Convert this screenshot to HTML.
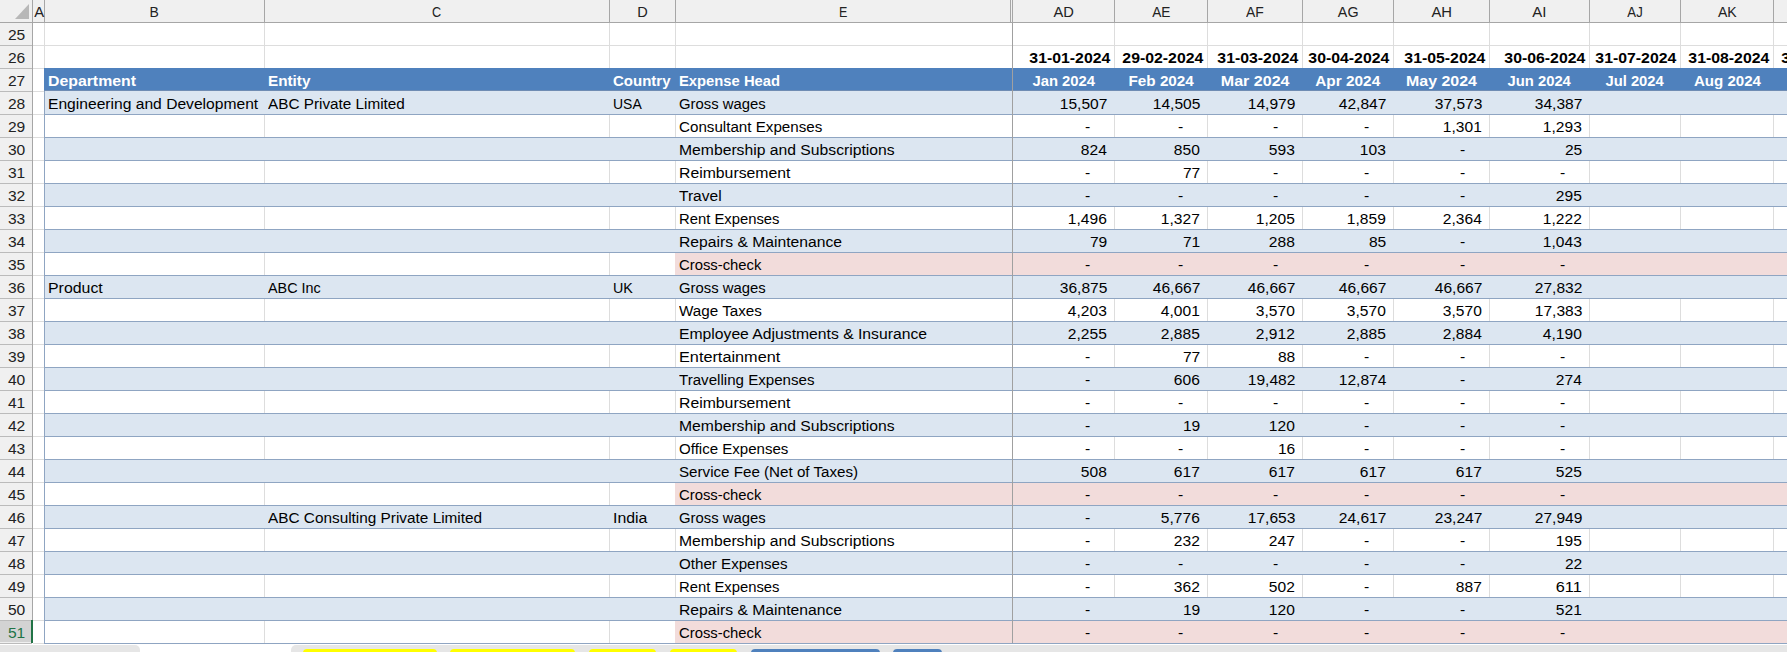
<!DOCTYPE html>
<html><head><meta charset="utf-8"><style>
html,body{margin:0;padding:0;}
body{width:1787px;height:652px;overflow:hidden;position:relative;background:#fff;font-family:"Liberation Sans",sans-serif;}
div,svg{position:absolute;}
span{position:absolute;white-space:pre;font-size:15.5px;line-height:20px;}
</style></head><body>
<div style="left:44px;top:23px;width:1px;height:620px;background:#DDDDDD;"></div>
<div style="left:264px;top:23px;width:1px;height:620px;background:#DDDDDD;"></div>
<div style="left:609px;top:23px;width:1px;height:620px;background:#DDDDDD;"></div>
<div style="left:675px;top:23px;width:1px;height:620px;background:#DDDDDD;"></div>
<div style="left:1114px;top:23px;width:1px;height:620px;background:#DDDDDD;"></div>
<div style="left:1207px;top:23px;width:1px;height:620px;background:#DDDDDD;"></div>
<div style="left:1302px;top:23px;width:1px;height:620px;background:#DDDDDD;"></div>
<div style="left:1393px;top:23px;width:1px;height:620px;background:#DDDDDD;"></div>
<div style="left:1489px;top:23px;width:1px;height:620px;background:#DDDDDD;"></div>
<div style="left:1589px;top:23px;width:1px;height:620px;background:#DDDDDD;"></div>
<div style="left:1680px;top:23px;width:1px;height:620px;background:#DDDDDD;"></div>
<div style="left:1773px;top:23px;width:1px;height:620px;background:#DDDDDD;"></div>
<div style="left:1866px;top:23px;width:1px;height:620px;background:#DDDDDD;"></div>
<div style="left:33px;top:45px;width:1754px;height:1px;background:#DDDDDD;"></div>
<div style="left:33px;top:68px;width:1754px;height:1px;background:#DDDDDD;"></div>
<div style="left:33px;top:91px;width:1754px;height:1px;background:#DDDDDD;"></div>
<div style="left:33px;top:114px;width:1754px;height:1px;background:#DDDDDD;"></div>
<div style="left:33px;top:137px;width:1754px;height:1px;background:#DDDDDD;"></div>
<div style="left:33px;top:160px;width:1754px;height:1px;background:#DDDDDD;"></div>
<div style="left:33px;top:183px;width:1754px;height:1px;background:#DDDDDD;"></div>
<div style="left:33px;top:206px;width:1754px;height:1px;background:#DDDDDD;"></div>
<div style="left:33px;top:229px;width:1754px;height:1px;background:#DDDDDD;"></div>
<div style="left:33px;top:252px;width:1754px;height:1px;background:#DDDDDD;"></div>
<div style="left:33px;top:275px;width:1754px;height:1px;background:#DDDDDD;"></div>
<div style="left:33px;top:298px;width:1754px;height:1px;background:#DDDDDD;"></div>
<div style="left:33px;top:321px;width:1754px;height:1px;background:#DDDDDD;"></div>
<div style="left:33px;top:344px;width:1754px;height:1px;background:#DDDDDD;"></div>
<div style="left:33px;top:367px;width:1754px;height:1px;background:#DDDDDD;"></div>
<div style="left:33px;top:390px;width:1754px;height:1px;background:#DDDDDD;"></div>
<div style="left:33px;top:413px;width:1754px;height:1px;background:#DDDDDD;"></div>
<div style="left:33px;top:436px;width:1754px;height:1px;background:#DDDDDD;"></div>
<div style="left:33px;top:459px;width:1754px;height:1px;background:#DDDDDD;"></div>
<div style="left:33px;top:482px;width:1754px;height:1px;background:#DDDDDD;"></div>
<div style="left:33px;top:505px;width:1754px;height:1px;background:#DDDDDD;"></div>
<div style="left:33px;top:528px;width:1754px;height:1px;background:#DDDDDD;"></div>
<div style="left:33px;top:551px;width:1754px;height:1px;background:#DDDDDD;"></div>
<div style="left:33px;top:574px;width:1754px;height:1px;background:#DDDDDD;"></div>
<div style="left:33px;top:597px;width:1754px;height:1px;background:#DDDDDD;"></div>
<div style="left:33px;top:620px;width:1754px;height:1px;background:#DDDDDD;"></div>
<div style="left:33px;top:643px;width:1754px;height:1px;background:#DDDDDD;"></div>
<div style="left:44px;top:68px;width:1743px;height:23px;background:#4F81BD;"></div>
<div style="left:44px;top:90px;width:1743px;height:1px;background:#6F8CB3;"></div>
<div style="left:44px;top:91px;width:1743px;height:23px;background:#DCE6F1;"></div>
<div style="left:44px;top:137px;width:1743px;height:23px;background:#DCE6F1;"></div>
<div style="left:44px;top:183px;width:1743px;height:23px;background:#DCE6F1;"></div>
<div style="left:44px;top:229px;width:1743px;height:23px;background:#DCE6F1;"></div>
<div style="left:675px;top:252px;width:1112px;height:23px;background:#F2DCDB;"></div>
<div style="left:44px;top:275px;width:1743px;height:23px;background:#DCE6F1;"></div>
<div style="left:44px;top:321px;width:1743px;height:23px;background:#DCE6F1;"></div>
<div style="left:44px;top:367px;width:1743px;height:23px;background:#DCE6F1;"></div>
<div style="left:44px;top:413px;width:1743px;height:23px;background:#DCE6F1;"></div>
<div style="left:44px;top:459px;width:1743px;height:23px;background:#DCE6F1;"></div>
<div style="left:675px;top:482px;width:1112px;height:23px;background:#F2DCDB;"></div>
<div style="left:44px;top:505px;width:1743px;height:23px;background:#DCE6F1;"></div>
<div style="left:44px;top:551px;width:1743px;height:23px;background:#DCE6F1;"></div>
<div style="left:44px;top:597px;width:1743px;height:23px;background:#DCE6F1;"></div>
<div style="left:675px;top:620px;width:1112px;height:23px;background:#F2DCDB;"></div>
<div style="left:44px;top:114px;width:1743px;height:1px;background:#8FA5C2;"></div>
<div style="left:44px;top:137px;width:1743px;height:1px;background:#8FA5C2;"></div>
<div style="left:44px;top:160px;width:1743px;height:1px;background:#8FA5C2;"></div>
<div style="left:44px;top:183px;width:1743px;height:1px;background:#8FA5C2;"></div>
<div style="left:44px;top:206px;width:1743px;height:1px;background:#8FA5C2;"></div>
<div style="left:44px;top:229px;width:1743px;height:1px;background:#8FA5C2;"></div>
<div style="left:44px;top:252px;width:1743px;height:1px;background:#8FA5C2;"></div>
<div style="left:44px;top:275px;width:1743px;height:1px;background:#8FA5C2;"></div>
<div style="left:44px;top:298px;width:1743px;height:1px;background:#8FA5C2;"></div>
<div style="left:44px;top:321px;width:1743px;height:1px;background:#8FA5C2;"></div>
<div style="left:44px;top:344px;width:1743px;height:1px;background:#8FA5C2;"></div>
<div style="left:44px;top:367px;width:1743px;height:1px;background:#8FA5C2;"></div>
<div style="left:44px;top:390px;width:1743px;height:1px;background:#8FA5C2;"></div>
<div style="left:44px;top:413px;width:1743px;height:1px;background:#8FA5C2;"></div>
<div style="left:44px;top:436px;width:1743px;height:1px;background:#8FA5C2;"></div>
<div style="left:44px;top:459px;width:1743px;height:1px;background:#8FA5C2;"></div>
<div style="left:44px;top:482px;width:1743px;height:1px;background:#8FA5C2;"></div>
<div style="left:44px;top:505px;width:1743px;height:1px;background:#8FA5C2;"></div>
<div style="left:44px;top:528px;width:1743px;height:1px;background:#8FA5C2;"></div>
<div style="left:44px;top:551px;width:1743px;height:1px;background:#8FA5C2;"></div>
<div style="left:44px;top:574px;width:1743px;height:1px;background:#8FA5C2;"></div>
<div style="left:44px;top:597px;width:1743px;height:1px;background:#8FA5C2;"></div>
<div style="left:44px;top:620px;width:1743px;height:1px;background:#8FA5C2;"></div>
<div style="left:44px;top:643px;width:1743px;height:1px;background:#8FA5C2;"></div>
<div style="left:44px;top:91px;width:1px;height:552px;background:#8FA5C2;"></div>
<div style="left:1012px;top:23px;width:1px;height:620px;background:#A0A0A0;"></div>
<div style="left:0px;top:0px;width:1787px;height:22px;background:#F0F0F0;"></div>
<div style="left:0px;top:23px;width:32px;height:620px;background:#F0F0F0;"></div>
<div style="left:0px;top:22px;width:1787px;height:1px;background:#A6A6A6;"></div>
<div style="left:32px;top:0px;width:1px;height:643px;background:#A6A6A6;"></div>
<div style="left:44px;top:0px;width:1px;height:22px;background:#A6A6A6;"></div>
<div style="left:264px;top:0px;width:1px;height:22px;background:#A6A6A6;"></div>
<div style="left:609px;top:0px;width:1px;height:22px;background:#A6A6A6;"></div>
<div style="left:675px;top:0px;width:1px;height:22px;background:#A6A6A6;"></div>
<div style="left:1010px;top:0px;width:1px;height:22px;background:#A6A6A6;"></div>
<div style="left:1114px;top:0px;width:1px;height:22px;background:#A6A6A6;"></div>
<div style="left:1207px;top:0px;width:1px;height:22px;background:#A6A6A6;"></div>
<div style="left:1302px;top:0px;width:1px;height:22px;background:#A6A6A6;"></div>
<div style="left:1393px;top:0px;width:1px;height:22px;background:#A6A6A6;"></div>
<div style="left:1489px;top:0px;width:1px;height:22px;background:#A6A6A6;"></div>
<div style="left:1589px;top:0px;width:1px;height:22px;background:#A6A6A6;"></div>
<div style="left:1680px;top:0px;width:1px;height:22px;background:#A6A6A6;"></div>
<div style="left:1773px;top:0px;width:1px;height:22px;background:#A6A6A6;"></div>
<div style="left:1866px;top:0px;width:1px;height:22px;background:#A6A6A6;"></div>
<div style="left:1012px;top:0px;width:1px;height:22px;background:#A6A6A6;"></div>
<div style="left:0px;top:45px;width:32px;height:1px;background:#BBBBBB;"></div>
<div style="left:0px;top:68px;width:32px;height:1px;background:#BBBBBB;"></div>
<div style="left:0px;top:91px;width:32px;height:1px;background:#BBBBBB;"></div>
<div style="left:0px;top:114px;width:32px;height:1px;background:#BBBBBB;"></div>
<div style="left:0px;top:137px;width:32px;height:1px;background:#BBBBBB;"></div>
<div style="left:0px;top:160px;width:32px;height:1px;background:#BBBBBB;"></div>
<div style="left:0px;top:183px;width:32px;height:1px;background:#BBBBBB;"></div>
<div style="left:0px;top:206px;width:32px;height:1px;background:#BBBBBB;"></div>
<div style="left:0px;top:229px;width:32px;height:1px;background:#BBBBBB;"></div>
<div style="left:0px;top:252px;width:32px;height:1px;background:#BBBBBB;"></div>
<div style="left:0px;top:275px;width:32px;height:1px;background:#BBBBBB;"></div>
<div style="left:0px;top:298px;width:32px;height:1px;background:#BBBBBB;"></div>
<div style="left:0px;top:321px;width:32px;height:1px;background:#BBBBBB;"></div>
<div style="left:0px;top:344px;width:32px;height:1px;background:#BBBBBB;"></div>
<div style="left:0px;top:367px;width:32px;height:1px;background:#BBBBBB;"></div>
<div style="left:0px;top:390px;width:32px;height:1px;background:#BBBBBB;"></div>
<div style="left:0px;top:413px;width:32px;height:1px;background:#BBBBBB;"></div>
<div style="left:0px;top:436px;width:32px;height:1px;background:#BBBBBB;"></div>
<div style="left:0px;top:459px;width:32px;height:1px;background:#BBBBBB;"></div>
<div style="left:0px;top:482px;width:32px;height:1px;background:#BBBBBB;"></div>
<div style="left:0px;top:505px;width:32px;height:1px;background:#BBBBBB;"></div>
<div style="left:0px;top:528px;width:32px;height:1px;background:#BBBBBB;"></div>
<div style="left:0px;top:551px;width:32px;height:1px;background:#BBBBBB;"></div>
<div style="left:0px;top:574px;width:32px;height:1px;background:#BBBBBB;"></div>
<div style="left:0px;top:597px;width:32px;height:1px;background:#BBBBBB;"></div>
<div style="left:0px;top:620px;width:32px;height:1px;background:#BBBBBB;"></div>
<div style="left:0px;top:643px;width:32px;height:1px;background:#BBBBBB;"></div>
<div style="left:0px;top:621px;width:31px;height:21px;background:#D3D3D3;"></div>
<div style="left:31px;top:620px;width:2px;height:23px;background:#217346;"></div>
<svg style="position:absolute;left:0;top:0" width="32" height="22"><polygon points="15,19 29,19 29,4" fill="#B8B8B8"/></svg>
<div style="left:0px;top:644px;width:1787px;height:8px;background:#FFFFFF;"></div>
<div style="left:0px;top:645px;width:140px;height:8px;background:#E6E6E6;border-top-right-radius:5px"></div>
<div style="left:291px;top:645px;width:1496px;height:8px;background:#E6E6E6;border-top-left-radius:5px"></div>
<div style="left:303px;top:649px;width:134px;height:6px;background:#FFFF00;border-radius:4px 4px 0 0"></div>
<div style="left:450px;top:649px;width:125px;height:6px;background:#FFFF00;border-radius:4px 4px 0 0"></div>
<div style="left:589px;top:649px;width:67px;height:6px;background:#FFFF00;border-radius:4px 4px 0 0"></div>
<div style="left:670px;top:649px;width:67px;height:6px;background:#FFFF00;border-radius:4px 4px 0 0"></div>
<div style="left:751px;top:649px;width:129px;height:6px;background:#4F81BD;border-radius:4px 4px 0 0"></div>
<div style="left:893px;top:649px;width:49px;height:6px;background:#4F81BD;border-radius:4px 4px 0 0"></div>
<span style="left:34.03px;transform-origin:50% 0;top:2.40px;color:#222;transform:scaleX(0.9567)">A</span>
<span style="left:149.33px;transform-origin:50% 0;top:2.40px;color:#222;transform:scaleX(0.8993)">B</span>
<span style="left:431.40px;transform-origin:50% 0;top:2.40px;color:#222;transform:scaleX(0.8140)">C</span>
<span style="left:636.90px;transform-origin:50% 0;top:2.40px;color:#222;transform:scaleX(0.9392)">D</span>
<span style="left:837.83px;transform-origin:50% 0;top:2.40px;color:#222;transform:scaleX(0.8073)">E</span>
<span style="left:1052.73px;transform-origin:50% 0;top:2.40px;color:#222;transform:scaleX(0.9476)">AD</span>
<span style="left:1150.66px;transform-origin:50% 0;top:2.40px;color:#222;transform:scaleX(0.8820)">AE</span>
<span style="left:1245.09px;transform-origin:50% 0;top:2.40px;color:#222;transform:scaleX(0.8961)">AF</span>
<span style="left:1336.80px;transform-origin:50% 0;top:2.40px;color:#222;transform:scaleX(0.9232)">AG</span>
<span style="left:1430.73px;transform-origin:50% 0;top:2.40px;color:#222;transform:scaleX(0.9538)">AH</span>
<span style="left:1532.17px;transform-origin:50% 0;top:2.40px;color:#222;transform:scaleX(0.9692)">AI</span>
<span style="left:1625.95px;transform-origin:50% 0;top:2.40px;color:#222;transform:scaleX(0.8483)">AJ</span>
<span style="left:1716.66px;transform-origin:50% 0;top:2.40px;color:#222;transform:scaleX(0.9078)">AK</span>
<span style="left:7.57px;transform-origin:50% 0;top:25.40px;color:#222;transform:scaleX(1.0050)">25</span>
<span style="left:7.57px;transform-origin:50% 0;top:48.40px;color:#222;transform:scaleX(1.0050)">26</span>
<span style="left:7.57px;transform-origin:50% 0;top:71.40px;color:#222;transform:scaleX(1.0050)">27</span>
<span style="left:7.57px;transform-origin:50% 0;top:94.40px;color:#222;transform:scaleX(1.0050)">28</span>
<span style="left:7.57px;transform-origin:50% 0;top:117.40px;color:#222;transform:scaleX(1.0050)">29</span>
<span style="left:7.57px;transform-origin:50% 0;top:140.40px;color:#222;transform:scaleX(1.0050)">30</span>
<span style="left:7.57px;transform-origin:50% 0;top:163.40px;color:#222;transform:scaleX(1.0050)">31</span>
<span style="left:7.57px;transform-origin:50% 0;top:186.40px;color:#222;transform:scaleX(1.0050)">32</span>
<span style="left:7.57px;transform-origin:50% 0;top:209.40px;color:#222;transform:scaleX(1.0050)">33</span>
<span style="left:7.57px;transform-origin:50% 0;top:232.40px;color:#222;transform:scaleX(1.0050)">34</span>
<span style="left:7.57px;transform-origin:50% 0;top:255.40px;color:#222;transform:scaleX(1.0050)">35</span>
<span style="left:7.57px;transform-origin:50% 0;top:278.40px;color:#222;transform:scaleX(1.0050)">36</span>
<span style="left:7.57px;transform-origin:50% 0;top:301.40px;color:#222;transform:scaleX(1.0050)">37</span>
<span style="left:7.57px;transform-origin:50% 0;top:324.40px;color:#222;transform:scaleX(1.0050)">38</span>
<span style="left:7.57px;transform-origin:50% 0;top:347.40px;color:#222;transform:scaleX(1.0050)">39</span>
<span style="left:7.57px;transform-origin:50% 0;top:370.40px;color:#222;transform:scaleX(1.0050)">40</span>
<span style="left:7.57px;transform-origin:50% 0;top:393.40px;color:#222;transform:scaleX(1.0050)">41</span>
<span style="left:7.57px;transform-origin:50% 0;top:416.40px;color:#222;transform:scaleX(1.0050)">42</span>
<span style="left:7.57px;transform-origin:50% 0;top:439.40px;color:#222;transform:scaleX(1.0050)">43</span>
<span style="left:7.57px;transform-origin:50% 0;top:462.40px;color:#222;transform:scaleX(1.0050)">44</span>
<span style="left:7.57px;transform-origin:50% 0;top:485.40px;color:#222;transform:scaleX(1.0050)">45</span>
<span style="left:7.57px;transform-origin:50% 0;top:508.40px;color:#222;transform:scaleX(1.0050)">46</span>
<span style="left:7.57px;transform-origin:50% 0;top:531.40px;color:#222;transform:scaleX(1.0050)">47</span>
<span style="left:7.57px;transform-origin:50% 0;top:554.40px;color:#222;transform:scaleX(1.0050)">48</span>
<span style="left:7.57px;transform-origin:50% 0;top:577.40px;color:#222;transform:scaleX(1.0050)">49</span>
<span style="left:7.57px;transform-origin:50% 0;top:600.40px;color:#222;transform:scaleX(1.0050)">50</span>
<span style="left:7.57px;transform-origin:50% 0;top:623.40px;color:#217346;transform:scaleX(1.0050)">51</span>
<span style="left:1031.20px;transform-origin:100% 0;top:48.40px;color:#000;font-weight:bold;transform:scaleX(1.0205)">31-01-2024</span>
<span style="left:1030.75px;transform-origin:50% 0;top:71.40px;color:#FFF;font-weight:bold;transform:scaleX(0.9559)">Jan 2024</span>
<span style="left:1124.20px;transform-origin:100% 0;top:48.40px;color:#000;font-weight:bold;transform:scaleX(1.0205)">29-02-2024</span>
<span style="left:1127.82px;transform-origin:50% 0;top:71.40px;color:#FFF;font-weight:bold;transform:scaleX(0.9849)">Feb 2024</span>
<span style="left:1219.20px;transform-origin:100% 0;top:48.40px;color:#000;font-weight:bold;transform:scaleX(1.0205)">31-03-2024</span>
<span style="left:1221.82px;transform-origin:50% 0;top:71.40px;color:#FFF;font-weight:bold;transform:scaleX(1.0360)">Mar 2024</span>
<span style="left:1310.20px;transform-origin:100% 0;top:48.40px;color:#000;font-weight:bold;transform:scaleX(1.0205)">30-04-2024</span>
<span style="left:1315.26px;transform-origin:50% 0;top:71.40px;color:#FFF;font-weight:bold;transform:scaleX(0.9925)">Apr 2024</span>
<span style="left:1406.20px;transform-origin:100% 0;top:48.40px;color:#000;font-weight:bold;transform:scaleX(1.0205)">31-05-2024</span>
<span style="left:1407.02px;transform-origin:50% 0;top:71.40px;color:#FFF;font-weight:bold;transform:scaleX(1.0290)">May 2024</span>
<span style="left:1506.20px;transform-origin:100% 0;top:48.40px;color:#000;font-weight:bold;transform:scaleX(1.0205)">30-06-2024</span>
<span style="left:1506.32px;transform-origin:50% 0;top:71.40px;color:#FFF;font-weight:bold;transform:scaleX(0.9550)">Jun 2024</span>
<span style="left:1597.20px;transform-origin:100% 0;top:48.40px;color:#000;font-weight:bold;transform:scaleX(1.0205)">31-07-2024</span>
<span style="left:1604.41px;transform-origin:50% 0;top:71.40px;color:#FFF;font-weight:bold;transform:scaleX(0.9527)">Jul 2024</span>
<span style="left:1690.20px;transform-origin:100% 0;top:48.40px;color:#000;font-weight:bold;transform:scaleX(1.0205)">31-08-2024</span>
<span style="left:1692.54px;transform-origin:50% 0;top:71.40px;color:#FFF;font-weight:bold;transform:scaleX(0.9738)">Aug 2024</span>
<span style="left:1783.20px;transform-origin:100% 0;top:48.40px;color:#000;font-weight:bold;transform:scaleX(1.0205)">30-09-2024</span>
<span style="left:1786.39px;transform-origin:50% 0;top:71.40px;color:#FFF;font-weight:bold;transform:scaleX(0.9694)">Sep 2024</span>
<span style="left:48.00px;transform-origin:0 0;top:71.40px;color:#FFF;font-weight:bold;transform:scaleX(1.0212)">Department</span>
<span style="left:268.00px;transform-origin:0 0;top:71.40px;color:#FFF;font-weight:bold;transform:scaleX(0.9850)">Entity</span>
<span style="left:613.00px;transform-origin:0 0;top:71.40px;color:#FFF;font-weight:bold;transform:scaleX(0.9682)">Country</span>
<span style="left:679.00px;transform-origin:0 0;top:71.40px;color:#FFF;font-weight:bold;transform:scaleX(0.9538)">Expense Head</span>
<span style="left:48.00px;transform-origin:0 0;top:94.40px;color:#000;transform:scaleX(1.0080)">Engineering and Development</span>
<span style="left:268.00px;transform-origin:0 0;top:94.40px;color:#000;transform:scaleX(0.9866)">ABC Private Limited</span>
<span style="left:613.00px;transform-origin:0 0;top:94.40px;color:#000;transform:scaleX(0.9012)">USA</span>
<span style="left:679.00px;transform-origin:0 0;top:94.40px;color:#000;transform:scaleX(0.9583)">Gross wages</span>
<span style="left:1059.58px;transform-origin:100% 0;top:94.40px;color:#000;transform:scaleX(1.0039)">15,507</span>
<span style="left:1152.58px;transform-origin:100% 0;top:94.40px;color:#000;transform:scaleX(1.0039)">14,505</span>
<span style="left:1247.58px;transform-origin:100% 0;top:94.40px;color:#000;transform:scaleX(1.0039)">14,979</span>
<span style="left:1338.58px;transform-origin:100% 0;top:94.40px;color:#000;transform:scaleX(1.0039)">42,847</span>
<span style="left:1434.58px;transform-origin:100% 0;top:94.40px;color:#000;transform:scaleX(1.0039)">37,573</span>
<span style="left:1534.58px;transform-origin:100% 0;top:94.40px;color:#000;transform:scaleX(1.0039)">34,387</span>
<span style="left:679.00px;transform-origin:0 0;top:117.40px;color:#000;transform:scaleX(0.9786)">Consultant Expenses</span>
<span style="left:1084.60px;transform-origin:100% 0;top:117.40px;color:#000;transform:scaleX(1.0124)">-</span>
<span style="left:1177.60px;transform-origin:100% 0;top:117.40px;color:#000;transform:scaleX(1.0124)">-</span>
<span style="left:1272.60px;transform-origin:100% 0;top:117.40px;color:#000;transform:scaleX(1.0124)">-</span>
<span style="left:1363.60px;transform-origin:100% 0;top:117.40px;color:#000;transform:scaleX(1.0124)">-</span>
<span style="left:1443.20px;transform-origin:100% 0;top:117.40px;color:#000;transform:scaleX(1.0037)">1,301</span>
<span style="left:1543.20px;transform-origin:100% 0;top:117.40px;color:#000;transform:scaleX(1.0037)">1,293</span>
<span style="left:679.00px;transform-origin:0 0;top:140.40px;color:#000;transform:scaleX(1.0135)">Membership and Subscriptions</span>
<span style="left:1081.12px;transform-origin:100% 0;top:140.40px;color:#000;transform:scaleX(1.0050)">824</span>
<span style="left:1174.12px;transform-origin:100% 0;top:140.40px;color:#000;transform:scaleX(1.0050)">850</span>
<span style="left:1269.12px;transform-origin:100% 0;top:140.40px;color:#000;transform:scaleX(1.0050)">593</span>
<span style="left:1360.12px;transform-origin:100% 0;top:140.40px;color:#000;transform:scaleX(1.0050)">103</span>
<span style="left:1459.60px;transform-origin:100% 0;top:140.40px;color:#000;transform:scaleX(1.0124)">-</span>
<span style="left:1564.75px;transform-origin:100% 0;top:140.40px;color:#000;transform:scaleX(1.0050)">25</span>
<span style="left:679.00px;transform-origin:0 0;top:163.40px;color:#000;transform:scaleX(1.0182)">Reimbursement</span>
<span style="left:1084.60px;transform-origin:100% 0;top:163.40px;color:#000;transform:scaleX(1.0124)">-</span>
<span style="left:1182.75px;transform-origin:100% 0;top:163.40px;color:#000;transform:scaleX(1.0050)">77</span>
<span style="left:1272.60px;transform-origin:100% 0;top:163.40px;color:#000;transform:scaleX(1.0124)">-</span>
<span style="left:1363.60px;transform-origin:100% 0;top:163.40px;color:#000;transform:scaleX(1.0124)">-</span>
<span style="left:1459.60px;transform-origin:100% 0;top:163.40px;color:#000;transform:scaleX(1.0124)">-</span>
<span style="left:1559.60px;transform-origin:100% 0;top:163.40px;color:#000;transform:scaleX(1.0124)">-</span>
<span style="left:679.00px;transform-origin:0 0;top:186.40px;color:#000;transform:scaleX(1.0034)">Travel</span>
<span style="left:1084.60px;transform-origin:100% 0;top:186.40px;color:#000;transform:scaleX(1.0124)">-</span>
<span style="left:1177.60px;transform-origin:100% 0;top:186.40px;color:#000;transform:scaleX(1.0124)">-</span>
<span style="left:1272.60px;transform-origin:100% 0;top:186.40px;color:#000;transform:scaleX(1.0124)">-</span>
<span style="left:1363.60px;transform-origin:100% 0;top:186.40px;color:#000;transform:scaleX(1.0124)">-</span>
<span style="left:1459.60px;transform-origin:100% 0;top:186.40px;color:#000;transform:scaleX(1.0124)">-</span>
<span style="left:1556.12px;transform-origin:100% 0;top:186.40px;color:#000;transform:scaleX(1.0050)">295</span>
<span style="left:679.00px;transform-origin:0 0;top:209.40px;color:#000;transform:scaleX(0.9560)">Rent Expenses</span>
<span style="left:1068.20px;transform-origin:100% 0;top:209.40px;color:#000;transform:scaleX(1.0037)">1,496</span>
<span style="left:1161.20px;transform-origin:100% 0;top:209.40px;color:#000;transform:scaleX(1.0037)">1,327</span>
<span style="left:1256.20px;transform-origin:100% 0;top:209.40px;color:#000;transform:scaleX(1.0037)">1,205</span>
<span style="left:1347.20px;transform-origin:100% 0;top:209.40px;color:#000;transform:scaleX(1.0037)">1,859</span>
<span style="left:1443.20px;transform-origin:100% 0;top:209.40px;color:#000;transform:scaleX(1.0037)">2,364</span>
<span style="left:1543.20px;transform-origin:100% 0;top:209.40px;color:#000;transform:scaleX(1.0037)">1,222</span>
<span style="left:679.00px;transform-origin:0 0;top:232.40px;color:#000;transform:scaleX(1.0118)">Repairs &amp; Maintenance</span>
<span style="left:1089.75px;transform-origin:100% 0;top:232.40px;color:#000;transform:scaleX(1.0050)">79</span>
<span style="left:1182.75px;transform-origin:100% 0;top:232.40px;color:#000;transform:scaleX(1.0050)">71</span>
<span style="left:1269.12px;transform-origin:100% 0;top:232.40px;color:#000;transform:scaleX(1.0050)">288</span>
<span style="left:1368.75px;transform-origin:100% 0;top:232.40px;color:#000;transform:scaleX(1.0050)">85</span>
<span style="left:1459.60px;transform-origin:100% 0;top:232.40px;color:#000;transform:scaleX(1.0124)">-</span>
<span style="left:1543.20px;transform-origin:100% 0;top:232.40px;color:#000;transform:scaleX(1.0037)">1,043</span>
<span style="left:679.00px;transform-origin:0 0;top:255.40px;color:#000;transform:scaleX(0.9571)">Cross-check</span>
<span style="left:1084.60px;transform-origin:100% 0;top:255.40px;color:#000;transform:scaleX(1.0124)">-</span>
<span style="left:1177.60px;transform-origin:100% 0;top:255.40px;color:#000;transform:scaleX(1.0124)">-</span>
<span style="left:1272.60px;transform-origin:100% 0;top:255.40px;color:#000;transform:scaleX(1.0124)">-</span>
<span style="left:1363.60px;transform-origin:100% 0;top:255.40px;color:#000;transform:scaleX(1.0124)">-</span>
<span style="left:1459.60px;transform-origin:100% 0;top:255.40px;color:#000;transform:scaleX(1.0124)">-</span>
<span style="left:1559.60px;transform-origin:100% 0;top:255.40px;color:#000;transform:scaleX(1.0124)">-</span>
<span style="left:48.00px;transform-origin:0 0;top:278.40px;color:#000;transform:scaleX(1.0248)">Product</span>
<span style="left:268.00px;transform-origin:0 0;top:278.40px;color:#000;transform:scaleX(0.9270)">ABC Inc</span>
<span style="left:613.00px;transform-origin:0 0;top:278.40px;color:#000;transform:scaleX(0.9216)">UK</span>
<span style="left:679.00px;transform-origin:0 0;top:278.40px;color:#000;transform:scaleX(0.9583)">Gross wages</span>
<span style="left:1059.58px;transform-origin:100% 0;top:278.40px;color:#000;transform:scaleX(1.0039)">36,875</span>
<span style="left:1152.58px;transform-origin:100% 0;top:278.40px;color:#000;transform:scaleX(1.0039)">46,667</span>
<span style="left:1247.58px;transform-origin:100% 0;top:278.40px;color:#000;transform:scaleX(1.0039)">46,667</span>
<span style="left:1338.58px;transform-origin:100% 0;top:278.40px;color:#000;transform:scaleX(1.0039)">46,667</span>
<span style="left:1434.58px;transform-origin:100% 0;top:278.40px;color:#000;transform:scaleX(1.0039)">46,667</span>
<span style="left:1534.58px;transform-origin:100% 0;top:278.40px;color:#000;transform:scaleX(1.0039)">27,832</span>
<span style="left:679.00px;transform-origin:0 0;top:301.40px;color:#000;transform:scaleX(0.9825)">Wage Taxes</span>
<span style="left:1068.20px;transform-origin:100% 0;top:301.40px;color:#000;transform:scaleX(1.0037)">4,203</span>
<span style="left:1161.20px;transform-origin:100% 0;top:301.40px;color:#000;transform:scaleX(1.0037)">4,001</span>
<span style="left:1256.20px;transform-origin:100% 0;top:301.40px;color:#000;transform:scaleX(1.0037)">3,570</span>
<span style="left:1347.20px;transform-origin:100% 0;top:301.40px;color:#000;transform:scaleX(1.0037)">3,570</span>
<span style="left:1443.20px;transform-origin:100% 0;top:301.40px;color:#000;transform:scaleX(1.0037)">3,570</span>
<span style="left:1534.58px;transform-origin:100% 0;top:301.40px;color:#000;transform:scaleX(1.0039)">17,383</span>
<span style="left:679.00px;transform-origin:0 0;top:324.40px;color:#000;transform:scaleX(1.0135)">Employee Adjustments &amp; Insurance</span>
<span style="left:1068.20px;transform-origin:100% 0;top:324.40px;color:#000;transform:scaleX(1.0037)">2,255</span>
<span style="left:1161.20px;transform-origin:100% 0;top:324.40px;color:#000;transform:scaleX(1.0037)">2,885</span>
<span style="left:1256.20px;transform-origin:100% 0;top:324.40px;color:#000;transform:scaleX(1.0037)">2,912</span>
<span style="left:1347.20px;transform-origin:100% 0;top:324.40px;color:#000;transform:scaleX(1.0037)">2,885</span>
<span style="left:1443.20px;transform-origin:100% 0;top:324.40px;color:#000;transform:scaleX(1.0037)">2,884</span>
<span style="left:1543.20px;transform-origin:100% 0;top:324.40px;color:#000;transform:scaleX(1.0037)">4,190</span>
<span style="left:679.00px;transform-origin:0 0;top:347.40px;color:#000;transform:scaleX(1.0492)">Entertainment</span>
<span style="left:1084.60px;transform-origin:100% 0;top:347.40px;color:#000;transform:scaleX(1.0124)">-</span>
<span style="left:1182.75px;transform-origin:100% 0;top:347.40px;color:#000;transform:scaleX(1.0050)">77</span>
<span style="left:1277.75px;transform-origin:100% 0;top:347.40px;color:#000;transform:scaleX(1.0050)">88</span>
<span style="left:1363.60px;transform-origin:100% 0;top:347.40px;color:#000;transform:scaleX(1.0124)">-</span>
<span style="left:1459.60px;transform-origin:100% 0;top:347.40px;color:#000;transform:scaleX(1.0124)">-</span>
<span style="left:1559.60px;transform-origin:100% 0;top:347.40px;color:#000;transform:scaleX(1.0124)">-</span>
<span style="left:679.00px;transform-origin:0 0;top:370.40px;color:#000;transform:scaleX(0.9750)">Travelling Expenses</span>
<span style="left:1084.60px;transform-origin:100% 0;top:370.40px;color:#000;transform:scaleX(1.0124)">-</span>
<span style="left:1174.12px;transform-origin:100% 0;top:370.40px;color:#000;transform:scaleX(1.0050)">606</span>
<span style="left:1247.58px;transform-origin:100% 0;top:370.40px;color:#000;transform:scaleX(1.0039)">19,482</span>
<span style="left:1338.58px;transform-origin:100% 0;top:370.40px;color:#000;transform:scaleX(1.0039)">12,874</span>
<span style="left:1459.60px;transform-origin:100% 0;top:370.40px;color:#000;transform:scaleX(1.0124)">-</span>
<span style="left:1556.12px;transform-origin:100% 0;top:370.40px;color:#000;transform:scaleX(1.0050)">274</span>
<span style="left:679.00px;transform-origin:0 0;top:393.40px;color:#000;transform:scaleX(1.0182)">Reimbursement</span>
<span style="left:1084.60px;transform-origin:100% 0;top:393.40px;color:#000;transform:scaleX(1.0124)">-</span>
<span style="left:1177.60px;transform-origin:100% 0;top:393.40px;color:#000;transform:scaleX(1.0124)">-</span>
<span style="left:1272.60px;transform-origin:100% 0;top:393.40px;color:#000;transform:scaleX(1.0124)">-</span>
<span style="left:1363.60px;transform-origin:100% 0;top:393.40px;color:#000;transform:scaleX(1.0124)">-</span>
<span style="left:1459.60px;transform-origin:100% 0;top:393.40px;color:#000;transform:scaleX(1.0124)">-</span>
<span style="left:1559.60px;transform-origin:100% 0;top:393.40px;color:#000;transform:scaleX(1.0124)">-</span>
<span style="left:679.00px;transform-origin:0 0;top:416.40px;color:#000;transform:scaleX(1.0135)">Membership and Subscriptions</span>
<span style="left:1084.60px;transform-origin:100% 0;top:416.40px;color:#000;transform:scaleX(1.0124)">-</span>
<span style="left:1182.75px;transform-origin:100% 0;top:416.40px;color:#000;transform:scaleX(1.0050)">19</span>
<span style="left:1269.12px;transform-origin:100% 0;top:416.40px;color:#000;transform:scaleX(1.0050)">120</span>
<span style="left:1363.60px;transform-origin:100% 0;top:416.40px;color:#000;transform:scaleX(1.0124)">-</span>
<span style="left:1459.60px;transform-origin:100% 0;top:416.40px;color:#000;transform:scaleX(1.0124)">-</span>
<span style="left:1559.60px;transform-origin:100% 0;top:416.40px;color:#000;transform:scaleX(1.0124)">-</span>
<span style="left:679.00px;transform-origin:0 0;top:439.40px;color:#000;transform:scaleX(0.9718)">Office Expenses</span>
<span style="left:1084.60px;transform-origin:100% 0;top:439.40px;color:#000;transform:scaleX(1.0124)">-</span>
<span style="left:1177.60px;transform-origin:100% 0;top:439.40px;color:#000;transform:scaleX(1.0124)">-</span>
<span style="left:1277.75px;transform-origin:100% 0;top:439.40px;color:#000;transform:scaleX(1.0050)">16</span>
<span style="left:1363.60px;transform-origin:100% 0;top:439.40px;color:#000;transform:scaleX(1.0124)">-</span>
<span style="left:1459.60px;transform-origin:100% 0;top:439.40px;color:#000;transform:scaleX(1.0124)">-</span>
<span style="left:1559.60px;transform-origin:100% 0;top:439.40px;color:#000;transform:scaleX(1.0124)">-</span>
<span style="left:679.00px;transform-origin:0 0;top:462.40px;color:#000;transform:scaleX(0.9775)">Service Fee (Net of Taxes)</span>
<span style="left:1081.12px;transform-origin:100% 0;top:462.40px;color:#000;transform:scaleX(1.0050)">508</span>
<span style="left:1174.12px;transform-origin:100% 0;top:462.40px;color:#000;transform:scaleX(1.0050)">617</span>
<span style="left:1269.12px;transform-origin:100% 0;top:462.40px;color:#000;transform:scaleX(1.0050)">617</span>
<span style="left:1360.12px;transform-origin:100% 0;top:462.40px;color:#000;transform:scaleX(1.0050)">617</span>
<span style="left:1456.12px;transform-origin:100% 0;top:462.40px;color:#000;transform:scaleX(1.0050)">617</span>
<span style="left:1556.12px;transform-origin:100% 0;top:462.40px;color:#000;transform:scaleX(1.0050)">525</span>
<span style="left:679.00px;transform-origin:0 0;top:485.40px;color:#000;transform:scaleX(0.9571)">Cross-check</span>
<span style="left:1084.60px;transform-origin:100% 0;top:485.40px;color:#000;transform:scaleX(1.0124)">-</span>
<span style="left:1177.60px;transform-origin:100% 0;top:485.40px;color:#000;transform:scaleX(1.0124)">-</span>
<span style="left:1272.60px;transform-origin:100% 0;top:485.40px;color:#000;transform:scaleX(1.0124)">-</span>
<span style="left:1363.60px;transform-origin:100% 0;top:485.40px;color:#000;transform:scaleX(1.0124)">-</span>
<span style="left:1459.60px;transform-origin:100% 0;top:485.40px;color:#000;transform:scaleX(1.0124)">-</span>
<span style="left:1559.60px;transform-origin:100% 0;top:485.40px;color:#000;transform:scaleX(1.0124)">-</span>
<span style="left:268.00px;transform-origin:0 0;top:508.40px;color:#000;transform:scaleX(0.9902)">ABC Consulting Private Limited</span>
<span style="left:613.00px;transform-origin:0 0;top:508.40px;color:#000;transform:scaleX(1.0229)">India</span>
<span style="left:679.00px;transform-origin:0 0;top:508.40px;color:#000;transform:scaleX(0.9583)">Gross wages</span>
<span style="left:1084.60px;transform-origin:100% 0;top:508.40px;color:#000;transform:scaleX(1.0124)">-</span>
<span style="left:1161.20px;transform-origin:100% 0;top:508.40px;color:#000;transform:scaleX(1.0037)">5,776</span>
<span style="left:1247.58px;transform-origin:100% 0;top:508.40px;color:#000;transform:scaleX(1.0039)">17,653</span>
<span style="left:1338.58px;transform-origin:100% 0;top:508.40px;color:#000;transform:scaleX(1.0039)">24,617</span>
<span style="left:1434.58px;transform-origin:100% 0;top:508.40px;color:#000;transform:scaleX(1.0039)">23,247</span>
<span style="left:1534.58px;transform-origin:100% 0;top:508.40px;color:#000;transform:scaleX(1.0039)">27,949</span>
<span style="left:679.00px;transform-origin:0 0;top:531.40px;color:#000;transform:scaleX(1.0135)">Membership and Subscriptions</span>
<span style="left:1084.60px;transform-origin:100% 0;top:531.40px;color:#000;transform:scaleX(1.0124)">-</span>
<span style="left:1174.12px;transform-origin:100% 0;top:531.40px;color:#000;transform:scaleX(1.0050)">232</span>
<span style="left:1269.12px;transform-origin:100% 0;top:531.40px;color:#000;transform:scaleX(1.0050)">247</span>
<span style="left:1363.60px;transform-origin:100% 0;top:531.40px;color:#000;transform:scaleX(1.0124)">-</span>
<span style="left:1459.60px;transform-origin:100% 0;top:531.40px;color:#000;transform:scaleX(1.0124)">-</span>
<span style="left:1556.12px;transform-origin:100% 0;top:531.40px;color:#000;transform:scaleX(1.0050)">195</span>
<span style="left:679.00px;transform-origin:0 0;top:554.40px;color:#000;transform:scaleX(0.9761)">Other Expenses</span>
<span style="left:1084.60px;transform-origin:100% 0;top:554.40px;color:#000;transform:scaleX(1.0124)">-</span>
<span style="left:1177.60px;transform-origin:100% 0;top:554.40px;color:#000;transform:scaleX(1.0124)">-</span>
<span style="left:1272.60px;transform-origin:100% 0;top:554.40px;color:#000;transform:scaleX(1.0124)">-</span>
<span style="left:1363.60px;transform-origin:100% 0;top:554.40px;color:#000;transform:scaleX(1.0124)">-</span>
<span style="left:1459.60px;transform-origin:100% 0;top:554.40px;color:#000;transform:scaleX(1.0124)">-</span>
<span style="left:1564.75px;transform-origin:100% 0;top:554.40px;color:#000;transform:scaleX(1.0050)">22</span>
<span style="left:679.00px;transform-origin:0 0;top:577.40px;color:#000;transform:scaleX(0.9560)">Rent Expenses</span>
<span style="left:1084.60px;transform-origin:100% 0;top:577.40px;color:#000;transform:scaleX(1.0124)">-</span>
<span style="left:1174.12px;transform-origin:100% 0;top:577.40px;color:#000;transform:scaleX(1.0050)">362</span>
<span style="left:1269.12px;transform-origin:100% 0;top:577.40px;color:#000;transform:scaleX(1.0050)">502</span>
<span style="left:1363.60px;transform-origin:100% 0;top:577.40px;color:#000;transform:scaleX(1.0124)">-</span>
<span style="left:1456.12px;transform-origin:100% 0;top:577.40px;color:#000;transform:scaleX(1.0050)">887</span>
<span style="left:1557.28px;transform-origin:100% 0;top:577.40px;color:#000;transform:scaleX(1.0520)">611</span>
<span style="left:679.00px;transform-origin:0 0;top:600.40px;color:#000;transform:scaleX(1.0118)">Repairs &amp; Maintenance</span>
<span style="left:1084.60px;transform-origin:100% 0;top:600.40px;color:#000;transform:scaleX(1.0124)">-</span>
<span style="left:1182.75px;transform-origin:100% 0;top:600.40px;color:#000;transform:scaleX(1.0050)">19</span>
<span style="left:1269.12px;transform-origin:100% 0;top:600.40px;color:#000;transform:scaleX(1.0050)">120</span>
<span style="left:1363.60px;transform-origin:100% 0;top:600.40px;color:#000;transform:scaleX(1.0124)">-</span>
<span style="left:1459.60px;transform-origin:100% 0;top:600.40px;color:#000;transform:scaleX(1.0124)">-</span>
<span style="left:1556.12px;transform-origin:100% 0;top:600.40px;color:#000;transform:scaleX(1.0050)">521</span>
<span style="left:679.00px;transform-origin:0 0;top:623.40px;color:#000;transform:scaleX(0.9571)">Cross-check</span>
<span style="left:1084.60px;transform-origin:100% 0;top:623.40px;color:#000;transform:scaleX(1.0124)">-</span>
<span style="left:1177.60px;transform-origin:100% 0;top:623.40px;color:#000;transform:scaleX(1.0124)">-</span>
<span style="left:1272.60px;transform-origin:100% 0;top:623.40px;color:#000;transform:scaleX(1.0124)">-</span>
<span style="left:1363.60px;transform-origin:100% 0;top:623.40px;color:#000;transform:scaleX(1.0124)">-</span>
<span style="left:1459.60px;transform-origin:100% 0;top:623.40px;color:#000;transform:scaleX(1.0124)">-</span>
<span style="left:1559.60px;transform-origin:100% 0;top:623.40px;color:#000;transform:scaleX(1.0124)">-</span>
</body></html>
